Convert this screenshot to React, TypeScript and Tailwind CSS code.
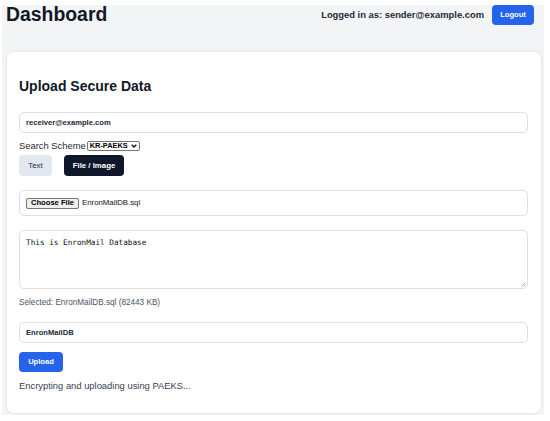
import { useState } from 'react';

const font = { fontFamily: '"Liberation Sans", Arial, sans-serif' };

function Field({ value }: { value: string }) {
  return (
    <div className="mt-[16px] h-[21px] rounded-[5px] border border-[#dedfe3] bg-white px-[6px] flex items-center text-[7.6px] font-semibold text-[#1f2937]">
      {value}
    </div>
  );
}

function SchemeSelect() {
  return (
    <span className="ml-[1px] inline-flex h-[10px] items-center gap-[2px] rounded-[2px] border border-[#767676] bg-white px-[2px] text-[7.4px] font-semibold leading-none text-black">
      KR-PAEKS
      <svg width="6" height="4" viewBox="0 0 6 4" className="ml-[1px]">
        <path d="M0.7 0.7 L3 3 L5.3 0.7" fill="none" stroke="#111" strokeWidth="1.3" />
      </svg>
    </span>
  );
}

export default function App() {
  const [mode, setMode] = useState<'text' | 'file'>('file');

  return (
    <div className="w-[550px] h-[421px] bg-white pl-[2px] pt-[5px] text-[#111827]" style={font}>
      <div className="w-[542px] h-[410px] bg-[#f3f4f6]">
        {/* top bar */}
        <div className="flex items-start justify-between pl-[4px] pr-[10px]">
          <h1 className="-mt-[1px] text-[19.4px] font-bold leading-[20px] text-[#111827]">Dashboard</h1>
          <div className="flex items-center gap-[8px]">
            <span className="text-[9.4px] font-bold text-[#1f2937]">Logged in as: sender@example.com</span>
            <button className="h-[20px] w-[42px] rounded-[4px] bg-[#2563eb] text-[7.6px] font-bold text-white">
              Logout
            </button>
          </div>
        </div>

        {/* upload card */}
        <div className="mt-[27px] ml-[5px] mr-[3px] rounded-[7px] bg-white px-[12px] pr-[13px] pt-[24px] pb-[20px] shadow-[0_0_3px_rgba(0,0,0,0.12)]">
          <h2 className="h-[20px] text-[14px] font-bold leading-[20px] text-[#111827]">Upload Secure Data</h2>

          <Field value="receiver@example.com" />

          <div className="mt-[6px] flex h-[14px] items-center text-[9.4px] text-[#1f2937]">
            Search Scheme
            <SchemeSelect />
          </div>

          <div className="mt-[2px] flex gap-[12px]">
            <button
              onClick={() => setMode('text')}
              className={
                mode === 'text'
                  ? 'h-[21px] w-[33px] rounded-[4px] bg-[#0f172a] text-[7.8px] font-bold text-white'
                  : 'h-[21px] w-[33px] rounded-[4px] bg-[#e2e8f0] text-[7.8px] text-[#1f2937]'
              }
            >
              Text
            </button>
            <button
              onClick={() => setMode('file')}
              className={
                mode === 'file'
                  ? 'h-[21px] w-[60px] rounded-[4px] bg-[#0f172a] text-[7.8px] font-bold text-white'
                  : 'h-[21px] w-[60px] rounded-[4px] bg-[#e2e8f0] text-[7.8px] text-[#1f2937]'
              }
            >
              File / Image
            </button>
          </div>

          <div className="mt-[14px] flex h-[26px] items-center gap-[3px] rounded-[5px] border border-[#dedfe3] px-[6px]">
            <span className="flex h-[11px] items-center rounded-[2px] border border-[#767676] bg-[#efefef] px-[4px] text-[7.6px] font-bold leading-none text-black">
              Choose File
            </span>
            <span className="text-[7.8px] text-[#111]">EnronMailDB.sql</span>
          </div>

          <div className="relative mt-[14px] h-[59px] rounded-[5px] border border-[#dedfe3] px-[6px] pt-[7px]">
            <div
              className="text-[7.7px] leading-[10px] text-[#111]"
              style={{ fontFamily: '"DejaVu Sans Mono", "Liberation Mono", monospace' }}
            >
              This is EnronMail Database
            </div>
            <svg width="5" height="5" viewBox="0 0 5 5" className="absolute bottom-[1px] right-[1px]">
              <path d="M0.5 4.5 L4.5 0.5 M2.5 4.5 L4.5 2.5" stroke="#999" strokeWidth="0.7" />
            </svg>
          </div>

          <div className="mt-[8px] h-[12px] text-[8.2px] leading-[12px] text-[#4b5563]">
            Selected: EnronMailDB.sql (82443 KB)
          </div>

          <div className="mt-[13px] flex h-[21px] items-center rounded-[5px] border border-[#dedfe3] px-[6px] text-[7.6px] font-semibold text-[#1f2937]">
            EnronMailDB
          </div>

          <button className="mt-[9px] h-[20px] w-[44px] rounded-[4px] bg-[#2563eb] text-[7.6px] font-bold text-white">
            Upload
          </button>

          <div className="mt-[7px] h-[14px] text-[9.4px] leading-[14px] text-[#374151]">
            Encrypting and uploading using PAEKS...
          </div>
        </div>
      </div>
    </div>
  );
}
